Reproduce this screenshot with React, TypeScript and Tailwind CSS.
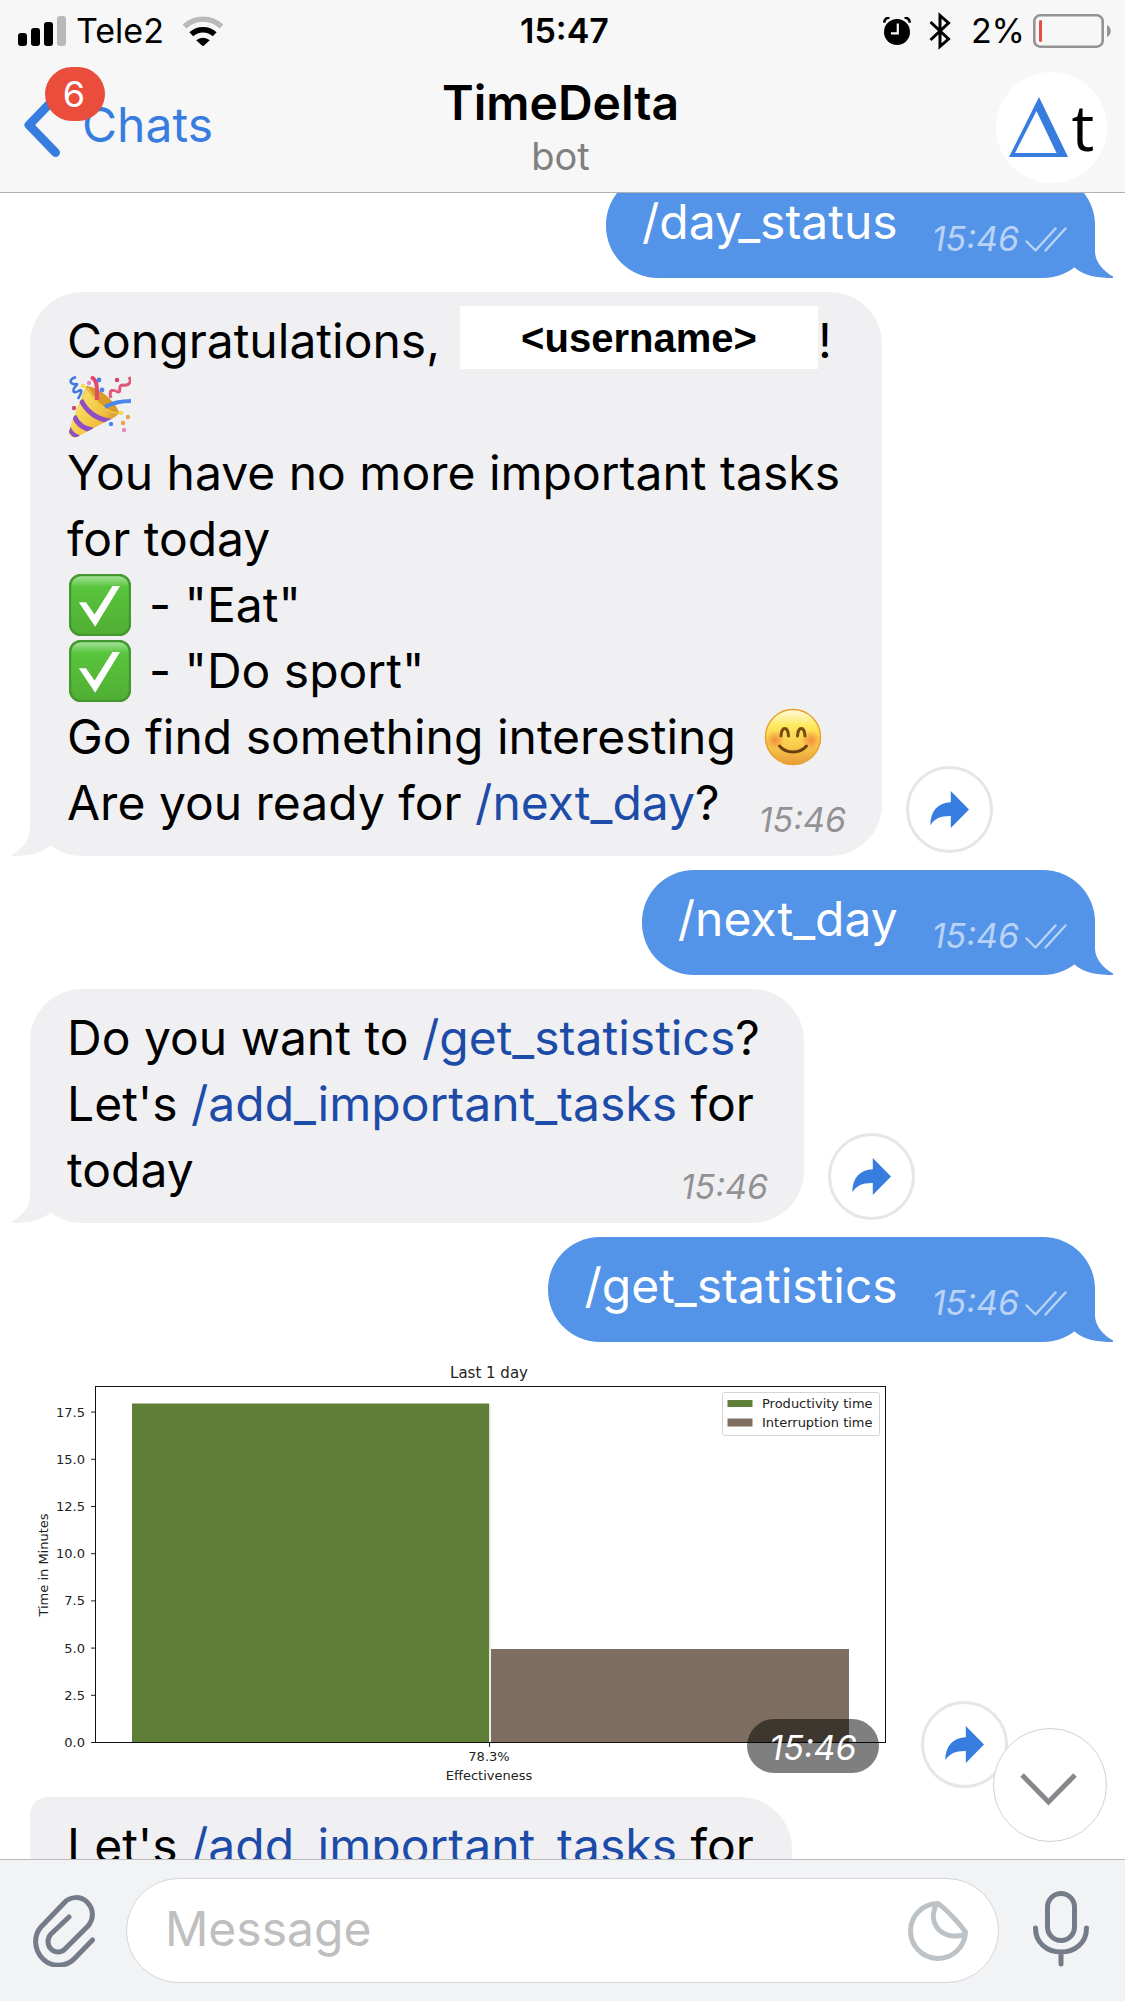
import type { ReactNode } from "react";

function SignalIcon() {
  return (
    <svg width="48" height="30" viewBox="0 0 48 30" aria-label="Signal strength" role="img">
      <rect x="0" y="17" width="9" height="13" rx="3" />
      <rect x="13" y="12" width="9" height="18" rx="3" />
      <rect x="26" y="6" width="9" height="24" rx="3" />
      <rect x="39" y="0" width="9" height="30" rx="3" fill="#b9b9b9" />
    </svg>
  );
}

function WifiIcon() {
  return (
    <svg width="42" height="30" viewBox="0 0 42 30" aria-label="Wi-Fi" role="img">
      <path d="M2.5 10.5a27 27 0 0 1 37 0" fill="none" stroke="#b9b9b9" strokeWidth="5.4" />
      <path d="M9.3 18.3a17.3 17.3 0 0 1 23.4 0" fill="none" stroke="#000" strokeWidth="5.6" />
      <path d="M14.2 24.3a10 10 0 0 1 13.6 0L21 30.4z" />
    </svg>
  );
}

function AlarmIcon() {
  return (
    <svg width="28" height="28" viewBox="0 0 28 28" aria-label="Alarm" role="img">
      <circle cx="14" cy="15" r="13" />
      <path d="M1.2 5.6C1.4 2.5 3.5.4 6.5.6M26.8 5.6C26.6 2.5 24.5.4 21.5.6" fill="none" stroke="#000" strokeWidth="2.6" />
      <path d="M14.8 6.5V16.3H8" fill="none" stroke="#f7f7f7" strokeWidth="2.2" />
    </svg>
  );
}

function BluetoothIcon() {
  return (
    <svg width="22" height="38" viewBox="0 0 22 38" aria-label="Bluetooth" role="img">
      <path d="M1.5 10L19.5 27 11 34.5V3.5L19.5 11 1.5 28" fill="none" stroke="#000" strokeWidth="3" />
    </svg>
  );
}

function BatteryIcon() {
  return (
    <svg width="78" height="34" viewBox="0 0 78 34" aria-label="Battery" role="img">
      <rect x="1.3" y="1.3" width="68.4" height="31.4" rx="6" fill="none" stroke="#949494" strokeWidth="2.6" />
      <rect x="6" y="6" width="3" height="22" rx="1.5" fill="#ea4d3d" />
      <path d="M74 11c5 2 5 10 0 12z" fill="#949494" />
    </svg>
  );
}

function Checks() {
  return (
    <svg width="42" height="25" viewBox="0 0 42 25" fill="none" stroke="#b9d3f6" strokeWidth="2.4" strokeLinecap="round" strokeLinejoin="round" aria-label="Read" role="img">
      <path d="M1.5 14.5L10.5 23.5 30.5 1.5M20.5 23.5L40.5 1.5" />
    </svg>
  );
}

function ForwardButton() {
  return (
    <button type="button" aria-label="Forward message" className="mb-[3px] ml-6 flex size-[87px] shrink-0 items-center justify-center rounded-full border-3 border-[#e5e5ea] bg-white">
      <svg width="39" height="37" viewBox="0 0 39 37" fill="#377de0">
        <path d="M20.8 0L39 18.5 20.8 37V25C10.5 24.8 4 28 .3 34.3.3 20 8 11.6 20.8 11.3z" />
      </svg>
    </button>
  );
}

function PartyEmoji() {
  return (
    <svg width="62" height="62" viewBox="0 0 62 62" role="img" aria-label="Party popper" className="inline-block align-middle">
      <defs>
        <linearGradient id="cone" x1="0" y1="0" x2="1" y2=".6">
          <stop offset="0" stopColor="#b9862a" />
          <stop offset=".35" stopColor="#f8dc5c" />
          <stop offset=".7" stopColor="#efbd3e" />
          <stop offset="1" stopColor="#b5781d" />
        </linearGradient>
        <clipPath id="coneClip">
          <path d="M17 10C27 10 44 24 50 36 49 40 44 42 38 45L10 60C5 63 0 61 0 56L3 45z" />
        </clipPath>
      </defs>
      <g clipPath="url(#coneClip)">
        <rect width="62" height="62" fill="url(#cone)" />
        <path d="M12 24C17 35 28 44 42 45" fill="none" stroke="#8f4fc4" strokeWidth="5" />
        <path d="M5 40C8 47 14 53 24 54" fill="none" stroke="#8f4fc4" strokeWidth="5" />
        <path d="M0 52C2 57 5 60 10 61" fill="none" stroke="#8f4fc4" strokeWidth="4" />
      </g>
      <path d="M17 10C28 10 47 25 50 37 45 43 20 22 17 10z" fill="#d99a27" />
      <path d="M19 12C26 26 39 37 49 37" fill="none" stroke="#f5cb50" strokeWidth="1.5" />
      <path d="M22 1C29 4 28 13 28 24" fill="none" stroke="#e24a68" strokeWidth="4" />
      <path d="M36 31C43 27 51 25 62 25" fill="none" stroke="#4b86e8" strokeWidth="4" />
      <path d="M42 22C39 12 45 14 49 16 53 17 48 9 54 9 60 10 63 6 60 1" fill="none" stroke="#e0587a" strokeWidth="3" />
      <path d="M7 1C-2 4 2 9 7 8 11 8 2 12 5 16 8 18 14 10 12 17L9 23" fill="none" stroke="#3f78e0" strokeWidth="2.5" />
      <g fill="#4b86e8"><circle cx="30" cy="4" r="2.4" /><circle cx="33" cy="14" r="2.4" /><circle cx="42" cy="48" r="2.2" /></g>
      <g fill="#f3dd4b"><circle cx="14" cy="10" r="2.3" /><circle cx="52" cy="37" r="2.2" /></g>
      <g fill="#e8a04a"><circle cx="59" cy="41" r="2.2" /><circle cx="54" cy="47" r="2.2" /></g>
      <g fill="#e48abf"><circle cx="20" cy="7" r="2.2" /><circle cx="55" cy="54" r="2.2" /></g>
      <g fill="#d0475f"><circle cx="48" cy="4" r="2.2" /><circle cx="5" cy="32" r="2.2" /></g>
    </svg>
  );
}

function CheckEmoji() {
  return (
    <svg width="62" height="62" viewBox="0 0 62 62" role="img" aria-label="Done" className="inline-block align-middle">
      <defs>
        <linearGradient id="tile" x1="0" y1="0" x2="0" y2="1">
          <stop offset="0" stopColor="#a9e6a0" />
          <stop offset=".2" stopColor="#58c43c" />
          <stop offset="1" stopColor="#50ae34" />
        </linearGradient>
      </defs>
      <rect x="1" y="1" width="60" height="60" rx="11" fill="url(#tile)" stroke="#439830" strokeWidth="2.5" />
      <path d="M9.8 28.3H17L25.6 40.5 43.5 12H51L26.2 52.7z" fill="#fff" />
    </svg>
  );
}

function SmileEmoji() {
  return (
    <svg width="58" height="58" viewBox="0 0 58 58" role="img" aria-label="Smiling face" className="inline-block align-middle">
      <defs>
        <linearGradient id="face" x1="0" y1="0" x2="0" y2="1">
          <stop offset="0" stopColor="#fffbe0" />
          <stop offset=".3" stopColor="#fde95c" />
          <stop offset=".65" stopColor="#f8cd4e" />
          <stop offset="1" stopColor="#e89a35" />
        </linearGradient>
        <radialGradient id="blush">
          <stop offset="0" stopColor="#f27a38" stopOpacity=".8" />
          <stop offset="1" stopColor="#f27a38" stopOpacity="0" />
        </radialGradient>
      </defs>
      <circle cx="29" cy="29" r="27.5" fill="url(#face)" stroke="#e9a02f" strokeWidth="1.5" />
      <circle cx="11" cy="32" r="10" fill="url(#blush)" />
      <circle cx="47" cy="32" r="10" fill="url(#blush)" />
      <path d="M17 28C17.5 18 24 18 24.5 28M33.5 28C34 18 40.5 18 41 28" fill="none" stroke="#7b4a12" strokeWidth="3" strokeLinecap="round" />
      <path d="M15.5 38C22 46 36 46 42.5 38" fill="none" stroke="#6b3d10" strokeWidth="2.8" strokeLinecap="round" />
    </svg>
  );
}

function Command({ children }: { children: ReactNode }) {
  return <a href="#command" className="text-[#1d4ba8]">{children}</a>;
}

function Outgoing({ text }: { text: string }) {
  return (
    <div className="relative flex items-end self-end rounded-[52px] bg-[#5393e8] pt-4 pr-7 pb-[23px] pl-9 text-white">
      <a href="#command">{text}</a>
      <span className="ml-[34px] flex items-center gap-1.5 text-[34px] leading-8 text-[#b9d3f6]">
        <time className="italic">15:46</time>
        <Checks />
      </span>
      <svg width="60" height="56" viewBox="0 0 60 56" fill="#5393e8" className="absolute -right-[18px] bottom-0">
        <path d="M42 0V30C42.5 40 50 49 60 54.5V56C46 56 30 54 21 45L10 34 20 0z" />
      </svg>
    </div>
  );
}

function Time() {
  return <time className="text-[34px] leading-8 text-[#929294] italic">15:46</time>;
}

function Incoming({ className, children }: { className: string; children: ReactNode }) {
  return (
    <div className="flex items-end">
      <div className={"relative rounded-[52px] bg-[#f0f0f3] pt-4 pr-9 pb-5 pl-[37px] " + className}>
        {children}
        <svg width="60" height="56" viewBox="0 0 60 56" fill="#f0f0f3" className="absolute bottom-0 -left-[18px]">
          <path d="M18 0V30C17.5 40 10 49 0 54.5V56C14 56 30 54 39 45L50 34 40 0z" />
        </svg>
      </div>
      <ForwardButton />
    </div>
  );
}

const ticks = ["0.0", "2.5", "5.0", "7.5", "10.0", "12.5", "15.0", "17.5"];

function Chart() {
  return (
    <svg viewBox="0 0 867 435" width="867" height="435" className="font-['DejaVu_Sans',sans-serif] text-[13px]" fill="#222" role="img" aria-label="Productivity and interruption time, last 1 day">
      <rect x="102" y="47.5" width="357" height="339" fill="#5f7f39" />
      <rect x="461" y="293" width="358" height="93.5" fill="#7d6e61" />
      <path d="M459.8 48V386" stroke="#dfe6d6" strokeWidth="1.5" />
      <rect x="65.5" y="30.5" width="790" height="356" fill="none" stroke="#111" />
      {ticks.map((t, i) => (
        <g key={t}>
          <path d={`M61 ${386.5 - i * 47.2}H65`} stroke="#222" />
          <text x="55" y={391 - i * 47.2} textAnchor="end">{t}</text>
        </g>
      ))}
      <path d="M459.5 387V391" stroke="#222" />
      <text x="459" y="405" textAnchor="middle">78.3%</text>
      <text x="459" y="424" textAnchor="middle">Effectiveness</text>
      <text x="459" y="22" textAnchor="middle" className="text-[15px]">Last 1 day</text>
      <text transform="translate(18 209) rotate(-90)" textAnchor="middle">Time in Minutes</text>
      <rect x="692.5" y="36.5" width="157" height="43" rx="2" fill="#fff" stroke="#d4d4d4" />
      <rect x="697.5" y="44" width="25" height="7" fill="#5f7f39" />
      <rect x="697.5" y="62.5" width="25" height="8" fill="#7d6e61" />
      <text x="732" y="52">Productivity time</text>
      <text x="732" y="71">Interruption time</text>
    </svg>
  );
}

export default function App() {
  return (
    <div className="flex h-screen flex-col overflow-hidden bg-white font-['Inter','Liberation_Sans',sans-serif] text-black">
      <header className="flex h-[193px] shrink-0 flex-col border-b border-[#b2b2b2] bg-[#f7f7f7]">
        <div className="grid h-[62px] grid-cols-[1fr_auto_1fr] items-center pr-3.5 pl-[18px] text-[34px] leading-10">
          <div className="flex items-center gap-2.5">
            <SignalIcon />
            <span>Tele2</span>
            <span className="ml-2"><WifiIcon /></span>
          </div>
          <time className="font-semibold">15:47</time>
          <div className="flex items-center justify-end">
            <AlarmIcon />
            <span className="mr-5 ml-[18px]"><BluetoothIcon /></span>
            <span className="mr-2 text-[34px]">2%</span>
            <BatteryIcon />
          </div>
        </div>
        <div className="grid flex-1 grid-cols-[1fr_auto_1fr] items-center pr-[18px] pl-6">
          <button type="button" className="relative mb-1 flex items-center gap-[22px] justify-self-start text-5xl text-[#377de0]">
            <svg width="36" height="64" viewBox="0 0 36 64" fill="none" stroke="#377de0" strokeWidth="9" strokeLinecap="round">
              <path d="M31.5 4.5L5 32 31.5 59.5" strokeLinejoin="round" />
            </svg>
            <span>Chats</span>
            <span className="absolute -top-[26px] left-[21px] flex h-[54px] w-[60px] items-center justify-center rounded-full bg-[#eb4d3d] pr-0.5 text-4xl text-white">6</span>
          </button>
          <div className="pt-1.5 pr-2.5 text-center">
            <h1 className="text-5xl leading-[52px] font-semibold">TimeDelta</h1>
            <p className="text-[38px] leading-[54px] text-[#7f7f7f]">bot</p>
          </div>
          <button type="button" aria-label="TimeDelta profile" className="flex size-[111px] items-center justify-center gap-1 justify-self-end rounded-full bg-white">
            <svg width="59" height="60" viewBox="0 0 59 60" fill="#377de0">
              <path fillRule="evenodd" d="M30 0L59 60H0zM27.5 14L6 56H47.5z" />
            </svg>
            <span className="font-['Open_Sans',sans-serif] text-[64px] leading-[64px] font-medium">t</span>
          </button>
        </div>
      </header>

      <main className="relative min-h-0 flex-1 overflow-hidden">
        <div className="-mt-5 flex flex-col gap-3.5 px-[30px] text-5xl leading-[66px] whitespace-nowrap">
          <Outgoing text="/day_status" />
          <Incoming className="min-w-[852px]">
            <p className="flex items-start">
              Congratulations,
              <span className="-mt-0.5 ml-5 flex h-[63px] w-[358px] items-center justify-center bg-white font-['Liberation_Sans',sans-serif] text-[40px] font-bold">&lt;username&gt;</span>
              !
            </p>
            <p className="flex h-[66px] items-center pl-0.5"><PartyEmoji /></p>
            <p>You have no more important tasks<br />for today</p>
            <p className="flex h-[66px] items-center gap-[18px] pl-0.5"><CheckEmoji /> - "Eat"</p>
            <p className="flex h-[66px] items-center gap-[18px] pl-0.5"><CheckEmoji /> - "Do sport"</p>
            <p className="flex h-[66px] items-center gap-7">Go find something interesting <SmileEmoji /></p>
            <div className="flex items-end justify-between">
              <p>Are you ready for <Command>/next_day</Command>?</p>
              <Time />
            </div>
          </Incoming>
          <Outgoing text="/next_day" />
          <Incoming className="min-w-[774px]">
            <p>Do you want to <Command>/get_statistics</Command>?<br />Let's <Command>/add_important_tasks</Command> for</p>
            <div className="flex items-end justify-between">
              <p>today</p>
              <Time />
            </div>
          </Incoming>
          <Outgoing text="/get_statistics" />
          <div className="flex items-end">
            <div className="relative">
              <Chart />
              <time className="absolute right-[18px] bottom-[18px] flex h-[54px] w-[132px] items-center justify-center rounded-full bg-black/50 pt-1 text-[34px] text-white italic">15:46</time>
            </div>
            <ForwardButton />
          </div>
          <div className="-mt-2 min-w-[762px] self-start rounded-t-[52px] rounded-tl-[18px] bg-[#f0f0f3] pt-4 pr-9 pl-[37px]">
            <p>Let's <Command>/add_important_tasks</Command> for</p>
          </div>
        </div>
        <button type="button" aria-label="Scroll to latest" className="absolute right-[18px] bottom-[17px] flex size-[114px] items-center justify-center rounded-full border border-[#d2d2d4] bg-white pt-2 pr-1">
          <svg width="57" height="33" viewBox="0 0 57 33" fill="none" stroke="#88888c" strokeWidth="5">
            <path d="M2 2L28.5 29 55 2" />
          </svg>
        </button>
      </main>

      <footer className="flex h-[142px] shrink-0 items-center border-t border-[#b9babd] bg-[#f2f3f5] pr-9 pl-[33px]">
        <button type="button" aria-label="Attach file">
          <svg width="62" height="72" viewBox="0 0 62 72" fill="none" stroke="#757c89" strokeWidth="5" strokeLinecap="round">
            <path d="M59.5 45L42 63C33 73 18 72 10 64 0 54 1 40 8 32L31 8C37 1 48 1 54 7 61 14 61 24 55 31L32 54C28 58 22 58 18 54 14 50 14 43 18 39L36 22" />
          </svg>
        </button>
        <label className="ml-[31px] flex h-[105px] min-w-0 flex-1 items-center rounded-full border border-[#d3d5d9] bg-white pr-[30px] pl-[38px]">
          <input type="text" aria-label="Message" placeholder="Message" className="min-w-0 flex-1 pb-1 text-5xl outline-none placeholder:text-[#bfbfbf]" />
          <button type="button" aria-label="Stickers">
            <svg width="60" height="60" viewBox="0 0 60 60" fill="none" stroke="#bcc2c6" strokeWidth="5" strokeLinejoin="round">
              <path d="M30 2.5A27.5 27.5 0 1 0 57.5 31C52 23 37 7 30 2.5zM28 4C19 24 35 40 57 33.5" />
            </svg>
          </button>
        </label>
        <button type="button" aria-label="Record voice message" className="mb-1 ml-[34px]">
          <svg width="56" height="76" viewBox="0 0 56 76" fill="none" stroke="#757c89" strokeWidth="5" strokeLinecap="round">
            <rect x="14.5" y="2.5" width="27" height="47" rx="13.5" />
            <path d="M2.5 37C2.5 52 14 61 28 61S53.5 52 53.5 37M28 61V73" />
          </svg>
        </button>
      </footer>
    </div>
  );
}
